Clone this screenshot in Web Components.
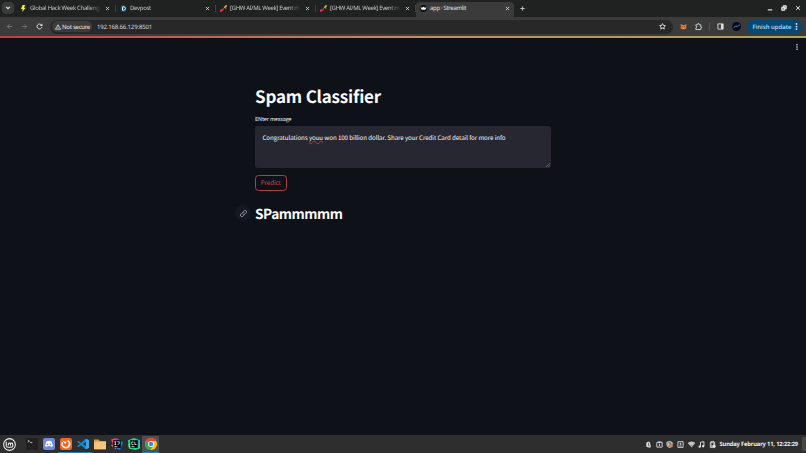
<!DOCTYPE html>
<html lang="en">
<head>
<meta charset="utf-8">
<title>app · Streamlit</title>
<style>
  html, body { margin: 0; height: 100%; overflow: hidden; background: #0e1117; }
  body { display: flex; flex-direction: column; font-family: "Noto Sans", sans-serif; text-rendering: geometricPrecision; }
</style>
</head>
<body>
<browser-tabs>
  <browser-tab icon="bolt" width="69.5">Global Hack Week Challeng</browser-tab>
  <browser-tab icon="devpost" width="21">Devpost</browser-tab>
  <browser-tab icon="ghw" width="69.5">[GHW AI/ML Week] Event m</browser-tab>
  <browser-tab icon="ghw" width="69.5">[GHW AI/ML Week] Event m</browser-tab>
  <browser-tab icon="streamlit" width="36" active>app · Streamlit</browser-tab>
</browser-tabs>
<browser-toolbar></browser-toolbar>
<streamlit-app>
  <st-title><fit-text width="126">Spam Classifier</fit-text></st-title>
  <st-textarea label="ENter message"><fit-text width="243">Congratulations <u>youu</u> won 100 billion dollar. Share your Credit Card detail for more info</fit-text></st-textarea>
  <st-button><fit-text width="20">Predict</fit-text></st-button>
  <st-header><fit-text width="87.5">SPammmmm</fit-text></st-header>
</streamlit-app>
<task-bar></task-bar>

<script>
const ICONS = {
  bolt: '<path d="M6 0h6L9 6h4L5 16l1-7H2z" fill="#f8ed3d"/>',
  devpost: '<path d="M4 0h8l4 8-4 8H4L0 8z" fill="#064866"/><path d="M5.8 4v8h2.4a4 4 0 0 0 0-8z" fill="none" stroke="#fff" stroke-width="2.2"/>',
  ghw: '<g fill="none" stroke-width="3.4" stroke-linecap="round"><path d="M2 13l1-1" stroke="#e63966" stroke-width="4.5"/><path d="M6 12l1-2" stroke="#d93431"/><path d="M7 8l4-2" stroke="#9b5731" stroke-width="2"/><path d="M11 5l3-3" stroke="#f4b63f"/><path d="M13 7v0" stroke="#e87931"/></g>',
  streamlit: '<circle cx="8" cy="8" r="8" fill="#111"/><path d="M1 5l4 1 3-2 3 2 4-1-3 6H4z" fill="#fff"/>',
  close: '<path d="M3 3l10 10m0-10L3 13" stroke="#e3e3e3" stroke-width="2.6"/>',
  plus: '<path d="M8 1v14M1 8h14" stroke="#d8d8d8" stroke-width="2.6"/>',
  chevron: '<path d="M3 5l5 5 5-5" fill="none" stroke="#e8e8e8" stroke-width="3"/>',
  min: '<path d="M2 13h12" stroke="#eee" stroke-width="3"/>',
  restore: '<path d="M6 6V2h8v8h-4M2 6h8v8H2z" fill="#999" stroke="#eee" stroke-width="2.6"/>',
  back: '<path d="M14 8H3m5-5L3 8l5 5" fill="none" stroke="#858585" stroke-width="1.8"/>',
  forward: '<path d="M2 8h11M8 3l5 5-5 5" fill="none" stroke="#777" stroke-width="1.8"/>',
  reload: '<path d="M13.5 9A5.6 5.6 0 1 1 12 4l1.5 1.5" fill="none" stroke="#ddd" stroke-width="2.2"/><path d="M14.5 1v6h-6z" fill="#ddd"/>',
  warn: '<path d="M8 2l7 12H1z" fill="none" stroke="#e4e4e4" stroke-width="2"/><path d="M8 6v4m0 1v2" stroke="#e4e4e4" stroke-width="1.7"/>',
  star: '<path d="M8 1.3l1.9 4.2 4.7.5-3.5 3.200 1 4.700L8 11.500l-4.100 2.400 1-4.700L1.400 6l4.700-.5z" fill="none" stroke="#e4e4e4" stroke-width="2"/>',
  fox: '<path d="M1 2l5 2.5h4L15 2l-1 6 1 4-4 2-2-1H7l-2 1-4-2 1-4z" fill="#e5771b"/><path d="M5 8l2 1m4-1L9 9" stroke="#5a3018" stroke-width="1.5"/><path d="M6 12h4v2H6z" fill="#d7c1b3"/>',
  puzzle: '<path d="M2 4h4V2.8a1.8 1.8 0 0 1 3.6 0V4H13v4h.5a1.7 1.7 0 0 1 0 3.4H13V15H2v-4a2 2 0 0 0 0-4z" fill="none" stroke="#ddd" stroke-width="2"/>',
  panel: '<path d="M2 2h12v12H2z" fill="none" stroke="#ddd" stroke-width="2"/><path d="M9 2h5v12H9z" fill="#ddd"/>',
  avatar: '<circle cx="8" cy="8" r="8" fill="#070b20"/><path d="M3 10l4-3 2 1 5-3" fill="none" stroke="#7f93bb" stroke-width="1.4"/>',
  dots: '<g fill="#f2f2f2"><circle cx="8" cy="2.2" r="2"/><circle cx="8" cy="8" r="2"/><circle cx="8" cy="13.8" r="2"/></g>',
  link: '<g fill="none" stroke="#a3a8b0" stroke-width="1.8" stroke-linecap="round"><path d="M6 9a3.300 3.300 0 0 0 5 1l3-3a3.300 3.300 0 0 0-5-5L7.500 3.500"/><path d="M10 7a3.300 3.300 0 0 0-5-1L2 9a3.300 3.300 0 0 0 5 5l1.500-1.500"/></g>',
  mint: '<circle cx="8" cy="8" r="7.2" fill="#303030" stroke="#eee" stroke-width="1.3"/><path d="M4 4.500v5A2.200 2.200 0 0 0 6.200 11.500h3.600A2.200 2.200 0 0 0 12 9.300V7.200a1.400 1.400 0 0 0-2.700 0V9.300M9.300 7.200a1.400 1.400 0 0 0-2.700 0V9.300" fill="none" stroke="#f2f2f2" stroke-width="1.300"/>',
  terminal: '<rect width="16" height="16" rx="2" fill="#202020"/><path d="M2.500 3l2 1.300-2 1.300M5.500 6h3" fill="none" stroke="#ddd" stroke-width="1.1"/>',
  discord: '<rect width="16" height="16" rx="3" fill="#7289da"/><path d="M4.500 4.500Q8 3 11.500 4.500L13.500 10.500 10.700 12 9.700 10.800H6.300L5.300 12 2.500 10.500z" fill="#fff"/><circle cx="6" cy="8.500" r="1.100" fill="#7289da"/><circle cx="10" cy="8.500" r="1.100" fill="#7289da"/>',
  firefox: '<rect width="16" height="16" rx="3" fill="#f26522"/><path d="M3.500 5.500A5 5 0 1 0 12 5L10 3.500" fill="none" stroke="#fff" stroke-width="2"/><path d="M3 3l3.500 2H9L7 8z" fill="#fff"/>',
  code: '<path d="M11.500 1L16 3v10l-4.500 2-6-5.500L2 12 0 11l4-3-4-3 2-1 3.500 2.500z" fill="#1689d4"/><path d="M12 5v6L8 8z" fill="#26323a"/><path d="M12 1l4 2v10l-4 2z" fill="#35a5ec"/>',
  folder: '<path d="M0 2h6l2 2h8v11H0z" fill="#d99a45"/><path d="M0 5h16v9q0 1-1 1H1q-1 0-1-1z" fill="#f5c67c"/>',
  idea: '<path d="M0 2l7-2 3 8-5 6z" fill="#fc3b71"/><path d="M8 0l8 6-4 10-7-3z" fill="#187df2"/><path d="M0 10l5-2 2 7z" fill="#f58b38"/><path d="M3 3h10v10H3z"/><path d="M4.500 5h2.500M5.800 5v3.500M4.500 8.500H7M8.500 5H11v2.500q0 1-2.200 1M4.500 11.500h4" fill="none" stroke="#fff" stroke-width="1"/>',
  clion: '<path d="M0 3l8-3 8 3v11l-6 2-9-2z" fill="#21d789"/><path d="M10 0l6 5-3 5z" fill="#12a5dc"/><path d="M0 9l5-2-2 8z" fill="#65e7ae"/><path d="M3 3h10v10H3z"/><path d="M7.500 5.500Q4.500 4 4.500 7t3 1.500M9 5v3.700h2.500M4.500 11.500h4" fill="none" stroke="#fff" stroke-width="1"/>',
  chrome: '<circle cx="8" cy="8" r="8" fill="#fbc116"/><path d="M8 8L1 4A8 8 0 0 1 15 4H8z" fill="#e94235"/><path d="M8 8L1 4A8 8 0 0 0 7 16l4-6z" fill="#34a853"/><circle cx="8" cy="8" r="3.900" fill="#fff"/><circle cx="8" cy="8" r="3" fill="#4285f4"/>',
  bell: '<path d="M8 1L3 4v9l5 2h5v-4L11 3z" fill="#ddd"/><path d="M8 4v7h2" fill="none" stroke="#333" stroke-width="1.500"/>',
  clip: '<path d="M2 3h12v11H2z" fill="none" stroke="#ddd" stroke-width="2"/><path d="M5 1h6v3H5zM7 6h2v6H7z" fill="#ddd"/>',
  shield: '<path d="M8 1l6 2v5q0 5-6 7-6-2-6-7V3z" fill="#777" stroke="#eee" stroke-width="1.800"/><path d="M4 5h4v6H5z" fill="#ccc"/><circle cx="12" cy="11.500" r="3.500" fill="#e8793c"/>',
  update: '<path d="M2 1.500h12v13H2z" fill="none" stroke="#ddd" stroke-width="2"/><path d="M8 4v5M5.500 6.500h5M5 11.500h6" stroke="#ddd" stroke-width="1.700"/>',
  wifi: '<path d="M0 5Q8-1 16 5L8 15z" fill="#aaa"/><path d="M0 5Q8-1 16 5M3 8q5-4 10 0" fill="none" stroke="#eee" stroke-width="1.700"/>',
  music: '<path d="M5.500 13V3l8-1.500v10" fill="none" stroke="#eee" stroke-width="2"/><circle cx="3.800" cy="13" r="2.600" fill="#eee"/><circle cx="11.800" cy="12" r="2.600" fill="#eee"/>',
  battery: '<path d="M5 1h6v2h2v12H3V3h2z" fill="#999" stroke="#eee" stroke-width="1.500"/><path d="M6 5h3v4H6z" fill="#222"/><circle cx="12" cy="12" r="3" fill="#eee"/>'
};

class UiIcon extends HTMLElement {
  connectedCallback() {
    this.attachShadow({ mode: 'open' }).innerHTML = `
      <style>
        :host { display: block; flex: none; width: var(--size, 7px); height: var(--size, 7px); }
        svg { display: block; width: 100%; height: 100%; overflow: visible; }
      </style>
      <svg viewBox="0 0 16 16">${ICONS[this.getAttribute('name')] || ''}</svg>`;
  }
}
customElements.define('ui-icon', UiIcon);

// One line of text, spaced out to a given width
class FitText extends HTMLElement {
  connectedCallback() {
    this.attachShadow({ mode: 'open' }).innerHTML = `
      <style>
        :host { display: block; flex: none; width: max-content; white-space: nowrap; }
        ::slotted(u) { text-decoration: underline wavy #c92b33 .4px; text-underline-offset: 0; text-decoration-skip-ink: none; }
      </style>
      <slot></slot>`;
    requestAnimationFrame(() => this.fit());
  }
  fit() {
    const natural = this.getBoundingClientRect().width;
    const space = (Number(this.getAttribute('width')) - natural) / this.textContent.length;
    this.style.letterSpacing = space + 'px';
  }
}

class BrowserTabs extends HTMLElement {
  connectedCallback() {
    this.attachShadow({ mode: 'open' }).innerHTML = `
      <style>
        :host { display: flex; flex: none; height: 17px; background: #202221; }
        .search { width: 12px; height: 12px; margin: 2px 2px 0; border-radius: 4px; background: #393a39; display: grid; place-items: center; --size: 6px; }
        .tabs { display: flex; }
        .new { --size: 5px; margin: 6px 0 0 3.5px; }
        .win { display: flex; gap: 8px; margin: 5px 5px 0 auto; --size: 6px; }
      </style>
      <div class="search"><ui-icon name="chevron"></ui-icon></div>
      <div class="tabs"><slot></slot></div>
      <ui-icon class="new" name="plus"></ui-icon>
      <div class="win"><ui-icon name="min"></ui-icon><ui-icon name="restore"></ui-icon><ui-icon name="close"></ui-icon></div>`;
  }
}
customElements.define('browser-tabs', BrowserTabs);

class BrowserTab extends HTMLElement {
  connectedCallback() {
    this.attachShadow({ mode: 'open' }).innerHTML = `
      <style>
        :host { display: flex; width: 100px; height: 17px; color: #c5c7c6; font-size: 6px; line-height: 17px; }
        .tab { display: flex; align-items: center; width: 100px; padding-left: 4px; box-sizing: border-box; }
        .label { width: 70px; height: 17px; margin-left: 3px; }
        .close { --size: 5px; margin-left: 5px; }
        .sep { width: 1px; height: 7px; margin-left: 5px; background: #4b3a36; }
        :host(:not([active])) .label { mask-image: linear-gradient(90deg, #000 84%, transparent 102%); }
        :host([active]) { color: #e2e2e2; line-height: 13px; }
        :host([active]) .tab { align-items: flex-start; width: 98px; height: 15px; margin-top: 2px; padding-top: 3px; border-radius: 4px 4px 0 0; background: #3b3b3c; }
        :host([active]) .label { height: 13px; margin-top: -3px; }
        :host([active]) .close { margin-top: 1px; }
        :host([active]) .sep { display: none; }
      </style>
      <div class="tab">
        <ui-icon name="${this.getAttribute('icon')}"></ui-icon>
        <div class="label"><fit-text width="${this.getAttribute('width')}">${this.textContent}</fit-text></div>
        <ui-icon class="close" name="close"></ui-icon>
        <div class="sep"></div>
      </div>`;
  }
}
customElements.define('browser-tab', BrowserTab);

class BrowserToolbar extends HTMLElement {
  connectedCallback() {
    this.attachShadow({ mode: 'open' }).innerHTML = `
      <style>
        :host { display: flex; flex: none; align-items: center; height: 19px; box-sizing: border-box; padding: 0 0 0 6px; background: #3b3b3c; color: #dedede; font-size: 6px; line-height: 10px; }
        .nav { display: flex; flex: none; gap: 8px; width: 44px; }
        .url { display: flex; flex: none; align-items: center; width: 623px; height: 14px; box-sizing: border-box; padding: 0 7px 0 2px; border-radius: 7px; background: #282828; }
        .safe { display: flex; align-items: center; gap: 1.5px; width: 40px; height: 11px; box-sizing: border-box; padding-left: 2.5px; border-radius: 6px; background: #3c3c3c; --size: 6px; font-weight: 500; }
        .address { margin-left: 5px; }
        .star { margin-left: auto; }
        .ext { display: flex; flex: none; align-items: center; width: 67px; margin-left: 7px; }
        .puzzle { margin-left: 8px; }
        .sep { width: 1px; height: 7px; margin: 0 7px; background: #555; }
        .avatar { --size: 9px; margin-left: 7.500px; }
        .update { display: flex; flex: none; align-items: center; justify-content: space-between; width: 55px; height: 14px; box-sizing: border-box; padding: 0 2px 0 5.500px; border-radius: 7px; background: #064875; color: #c2e3fb; font-weight: 500; }
      </style>
      <div class="nav"><ui-icon name="back"></ui-icon><ui-icon name="forward"></ui-icon><ui-icon name="reload"></ui-icon></div>
      <div class="url">
        <div class="safe"><ui-icon name="warn"></ui-icon><fit-text width="28">Not secure</fit-text></div>
        <fit-text class="address" width="55">192.168.66.129:8501</fit-text>
        <ui-icon class="star" name="star"></ui-icon>
      </div>
      <div class="ext"><ui-icon name="fox"></ui-icon><ui-icon class="puzzle" name="puzzle"></ui-icon><div class="sep"></div><ui-icon name="panel"></ui-icon><ui-icon class="avatar" name="avatar"></ui-icon></div>
      <div class="update"><fit-text width="39">Finish update</fit-text><ui-icon name="dots"></ui-icon></div>`;
  }
}
customElements.define('browser-toolbar', BrowserToolbar);

class StreamlitApp extends HTMLElement {
  connectedCallback() {
    this.attachShadow({ mode: 'open' }).innerHTML = `
      <style>
        :host { display: block; flex: 1; background: #0e1117; color: #fafafa; font-family: "Noto Sans CJK SC", sans-serif; }
        .line { height: 2px; background: linear-gradient(90deg, #bd3d43, #c48b65 50%, #aaa451); }
        .menu { display: flex; justify-content: flex-end; height: 39px; box-sizing: border-box; padding: 5.500px 6px 0 0; --size: 6px; }
        main { width: 296px; margin-left: 255px; display: flex; flex-direction: column; align-items: flex-start; }
      </style>
      <div class="line"></div>
      <div class="menu"><ui-icon name="dots"></ui-icon></div>
      <main><slot></slot></main>`;
  }
}
customElements.define('streamlit-app', StreamlitApp);

class StTitle extends HTMLElement {
  connectedCallback() {
    this.attachShadow({ mode: 'open' }).innerHTML = `
      <style>:host { display: block; height: 37px; font-size: 17px; line-height: 37px; font-weight: 700; }</style>
      <slot></slot>`;
  }
}
customElements.define('st-title', StTitle);

class StTextarea extends HTMLElement {
  connectedCallback() {
    this.attachShadow({ mode: 'open' }).innerHTML = `
      <style>
        :host { display: block; }
        .label { height: 12px; font-size: 5.400px; line-height: 11px; }
        .box { position: relative; width: 296px; height: 42px; box-sizing: border-box; padding: 6px 7.500px; border-radius: 3px; background: #262730; font-size: 6.200px; line-height: 12px; }
        svg { position: absolute; right: 1px; bottom: 1px; width: 4px; height: 4px; }
      </style>
      <div class="label"><fit-text width="36.5">${this.getAttribute('label')}</fit-text></div>
      <div class="box"><slot></slot><svg viewBox="0 0 4 4"><path d="M0 4l4-4M2 4l2-2" stroke="#8b8c91" stroke-width=".5"/></svg></div>`;
  }
}
customElements.define('st-textarea', StTextarea);

class StButton extends HTMLElement {
  connectedCallback() {
    this.attachShadow({ mode: 'open' }).innerHTML = `
      <style>
        :host { display: block; margin-top: 7px; }
        button { display: flex; align-items: center; justify-content: center; box-sizing: border-box; width: 31.500px; height: 16px; padding: 0; border: 1px solid #b83b43; border-radius: 3.500px; background: none; color: #d8444b; font: 6.200px/14px "Noto Sans CJK SC", sans-serif; text-rendering: geometricPrecision; }
      </style>
      <button><slot></slot></button>`;
  }
}
customElements.define('st-button', StButton);

class StHeader extends HTMLElement {
  connectedCallback() {
    this.attachShadow({ mode: 'open' }).innerHTML = `
      <style>
        :host { display: flex; align-items: center; height: 24px; margin: 10px 0 0 -20px; font-size: 13.700px; line-height: 24px; font-weight: 600; }
        .anchor { display: grid; place-items: center; width: 16px; height: 16px; margin-right: 4px; border-radius: 50%; background: #151820; --size: 7px; }
      </style>
      <div class="anchor"><ui-icon name="link"></ui-icon></div>
      <slot></slot>`;
  }
}
customElements.define('st-header', StHeader);

class TaskBar extends HTMLElement {
  connectedCallback() {
    const apps = ['terminal', 'discord', 'firefox', 'code', 'folder', 'idea', 'clion', 'chrome'];
    const tray = ['bell', 'clip', 'shield', 'update', 'wifi', 'music', 'battery'];
    this.attachShadow({ mode: 'open' }).innerHTML = `
      <style>
        :host { display: flex; flex: none; align-items: center; height: 18px; background: #2e2e2e; color: #eee; }
        .mint { --size: 13px; margin-left: 2.500px; }
        .apps { display: flex; margin-left: 8.500px; --size: 12px; }
        .app { display: grid; place-items: center; width: 16.900px; height: 17px; margin-top: 1px; box-sizing: border-box; border-bottom: 1.500px solid transparent; }
        .firefox, .code, .chrome { border-color: #1287bd; }
        .chrome { background: #505050; }
        .tray { display: flex; gap: 3.700px; margin-left: auto; --size: 7px; }
        .clock { margin-left: 3.500px; font-size: 5.800px; font-weight: 700; line-height: 18px; }
        .show { width: 4px; height: 14px; margin: 0 0 0 4px; background: #464646; }
      </style>
      <ui-icon class="mint" name="mint"></ui-icon>
      <div class="apps">${apps.map(a => `<div class="app ${a}"><ui-icon name="${a}"></ui-icon></div>`).join('')}</div>
      <div class="tray">${tray.map(t => `<ui-icon name="${t}"></ui-icon>`).join('')}</div>
      <fit-text class="clock" width="78.5">Sunday February 11, 12:22:29</fit-text>
      <div class="show"></div>`;
  }
}
customElements.define('task-bar', TaskBar);
customElements.define('fit-text', FitText);
</script>
</body>
</html>
